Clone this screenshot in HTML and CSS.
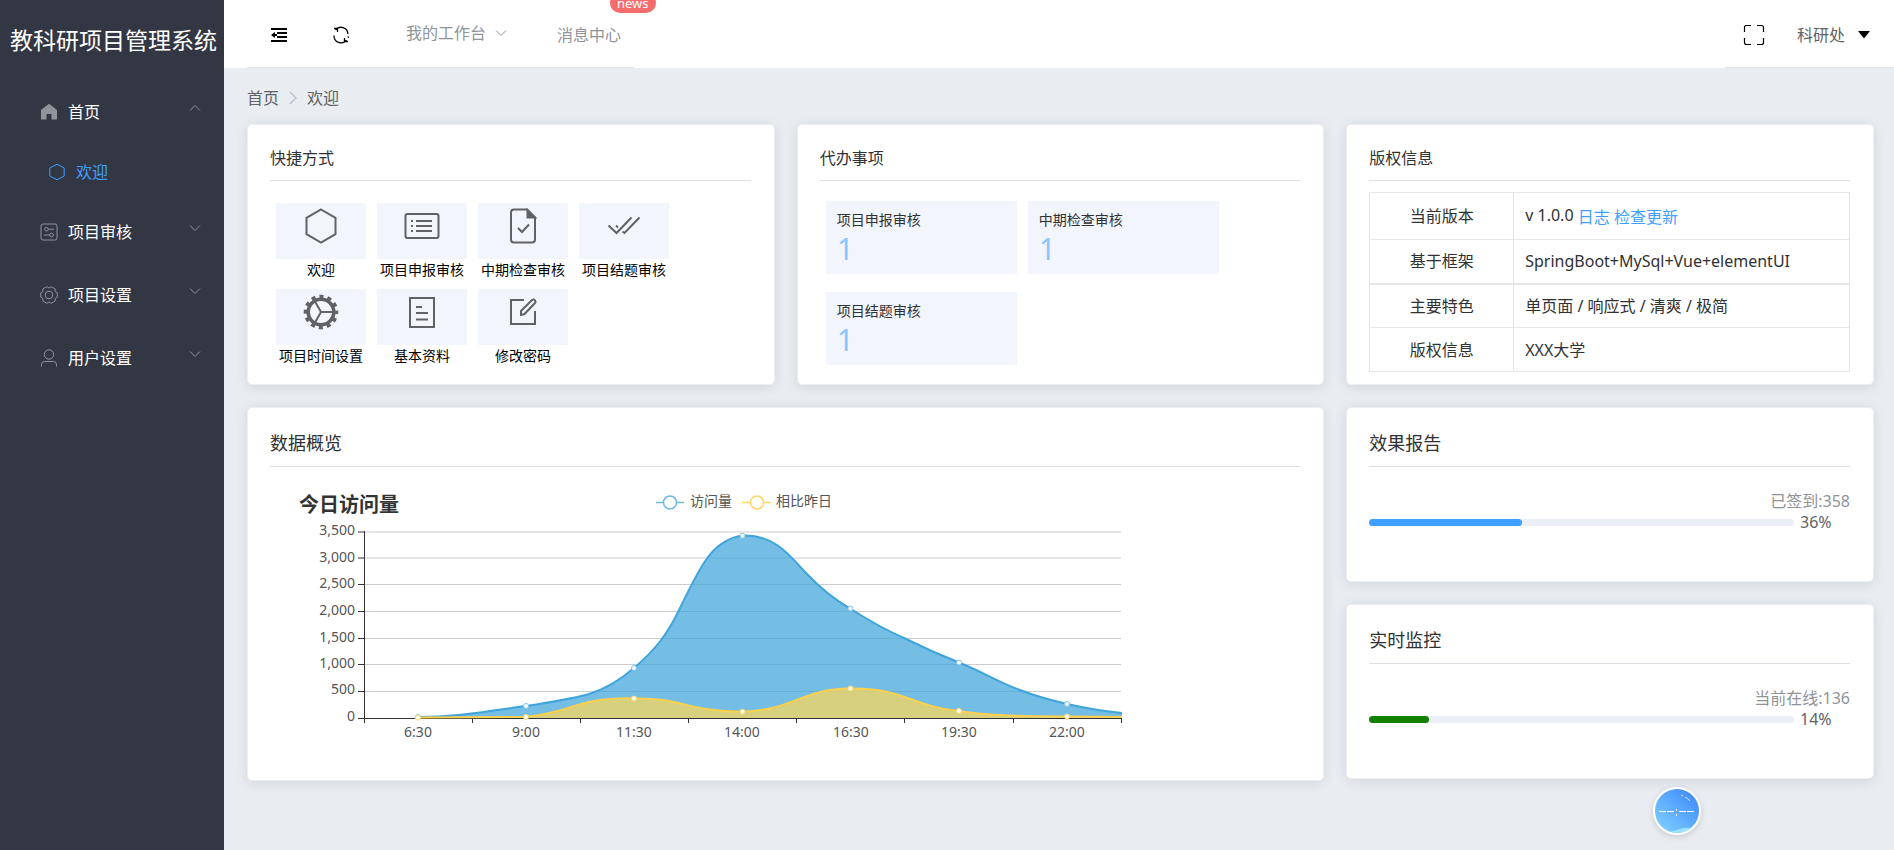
FILE: index.html
```html
<!DOCTYPE html>
<html lang="zh-CN">
<head>
<meta charset="utf-8">
<meta name="viewport" content="width=device-width, initial-scale=1">
<title>教科研项目管理系统</title>
<link rel="stylesheet" href="styles.css">
</head>
<body>
<div class="layout">
  <aside class="sidebar">
    <h1 class="brand">教科研项目管理系统</h1>
    <nav class="menu">
      <button class="menu-item" type="button" aria-expanded="true">
        <svg class="menu-icon" viewBox="0 0 18 18"><path fill="currentColor" stroke="none" d="M9 .8 1 7V16.500h5.500v-5.500h5v5.500H17V7z"/></svg>
        <span>首页</span>
        <svg class="arrow" viewBox="0 0 12 12"><path d="M1 8.500 6 3.500l5 5"/></svg>
      </button>
      <a class="menu-sub" href="#">
        <svg class="menu-icon" viewBox="0 0 18 18"><path d="M9 1.200 16.200 5v8L9 16.800 1.800 13V5z"/></svg>
        <span>欢迎</span>
      </a>
      <button class="menu-item" type="button" aria-expanded="false">
        <svg class="menu-icon" viewBox="0 0 18 18"><rect x="1" y="1" width="16" height="16" rx="2"/><circle cx="6.500" cy="6.200" r="1.800"/><circle cx="11.500" cy="12" r="1.800"/><path d="M8.300 6.200H14M4 12h5.700"/></svg>
        <span>项目审核</span>
        <svg class="arrow" viewBox="0 0 12 12"><path d="M1 3.500l5 5 5-5"/></svg>
      </button>
      <button class="menu-item" type="button" aria-expanded="false">
        <svg class="menu-icon" viewBox="0 0 18 18"><circle cx="9" cy="9" r="3.800"/><path stroke-linejoin="round" d="M17.300 6.800v4.400l-2.200 1.300v2.600l-3.900 2.200L9 16l-2.200 1.300-3.900-2.200v-2.600L.7 11.200V6.800l2.200-1.300V2.900L6.800.7 9 2l2.200-1.300 3.900 2.200v2.600z"/></svg>
        <span>项目设置</span>
        <svg class="arrow" viewBox="0 0 12 12"><path d="M1 3.500l5 5 5-5"/></svg>
      </button>
      <button class="menu-item" type="button" aria-expanded="false">
        <svg class="menu-icon" viewBox="0 0 18 18"><circle cx="9" cy="5.500" r="4.700"/><path d="M1.500 17.500v-2q0-3 3-3h9q3 0 3 3v2"/></svg>
        <span>用户设置</span>
        <svg class="arrow" viewBox="0 0 12 12"><path d="M1 3.500l5 5 5-5"/></svg>
      </button>
    </nav>
  </aside>

  <div class="page">
    <header class="topbar">
      <div class="topbar-left">
        <button class="icon-btn" type="button" aria-label="折叠菜单">
          <svg width="16" height="16" viewBox="0 0 16 16"><path fill="none" stroke="currentColor" stroke-width="2" d="M0 2h16M6 6h10M6 10h10M0 14h16"/><path fill="currentColor" d="M0 8l4-3v2h2v2H4v2z"/></svg>
        </button>
        <button class="icon-btn refresh" type="button" aria-label="刷新">
          <svg width="18" height="18" viewBox="0 0 18 18" fill="none" stroke="currentColor" stroke-width="1.300"><path d="M3.500 3.900A7 7 0 0 1 15.900 8M2 9.500a7 7 0 0 0 12.500 4.600M16.500 10.500a7 7 0 0 1-.4 1.300M2 2.500h3.500V6M16 15.500h-3.500V12"/></svg>
        </button>
        <a class="top-link workbench" href="#">我的工作台
          <svg class="arrow" viewBox="0 0 12 12"><path d="M1 3.500l5 5 5-5"/></svg>
        </a>
        <a class="top-link news" href="#">消息中心<span class="badge">news</span></a>
      </div>
      <div class="topbar-right">
        <button class="icon-btn" type="button" aria-label="全屏">
          <svg width="22" height="22" viewBox="0 0 22 22" fill="none" stroke="currentColor" stroke-width="1.200"><path d="M1.500 8V3.500q0-2 2-2H8M14 1.500h4.500q2 0 2 2V8M20.500 14v4.500q0 2-2 2H14M8 20.500H3.500q-2 0-2-2V14"/></svg>
        </button>
        <button class="user" type="button">科研处
          <svg width="12" height="8" viewBox="0 0 12 8"><path d="M0 0h12L6 7.500z"/></svg>
        </button>
      </div>
    </header>

    <main class="content">
      <nav class="crumbs" aria-label="面包屑">
        <a href="#">首页</a>
        <svg width="8" height="14" viewBox="0 0 8 14"><path d="M1 1l6 6-6 6"/></svg>
        <span>欢迎</span>
      </nav>

      <div class="grid">
        <section class="card">
          <h2 class="card-title">快捷方式</h2>
          <div class="shortcuts">
            <a class="shortcut" href="#"><span class="tile"><svg viewBox="0 0 36 36"><path d="M18 1.500 32.500 9.800v16.400L18 34.500 3.500 26.200V9.800z"/></svg></span>欢迎</a>
            <a class="shortcut" href="#"><span class="tile"><svg viewBox="0 0 36 36"><rect x="1.500" y="6" width="33" height="24" rx="2"/><path d="M12 13h16M12 18h16M12 23h16M7 13h2M7 18h2M7 23h2"/></svg></span>项目申报审核</a>
            <a class="shortcut" href="#"><span class="tile"><svg viewBox="0 0 36 36"><path d="M22 1.500H9q-3 0-3 3v27q0 3 3 3h18q3 0 3-3V9.500zM13 20l4 4 7-7.500"/><path class="solid" d="M22.500 2v7.500H30z"/></svg></span>中期检查审核</a>
            <a class="shortcut" href="#"><span class="tile"><svg viewBox="0 0 36 36"><path d="M2.500 17.500l8 7.500L25.500 9.500M10 17.500l2 2M16.500 23.500l2 1.500L33.500 9.500"/></svg></span>项目结题审核</a>
            <a class="shortcut" href="#"><span class="tile"><svg viewBox="0 0 36 36"><circle cx="18" cy="18" r="12.800" stroke-width="3.600"/><circle cx="18" cy="18" r="15.500" stroke-width="3.600" stroke-dasharray="4.100 4.015" stroke-dashoffset="2.050"/><path d="M18 18h12M18 18l-6-10.400M18 18l-6 10.400"/></svg></span>项目时间设置</a>
            <a class="shortcut" href="#"><span class="tile"><svg viewBox="0 0 36 36"><path d="M6 4h24v29H6zM12 13h6M12 19h12M12 25.500h12"/></svg></span>基本资料</a>
            <a class="shortcut" href="#"><span class="tile"><svg viewBox="0 0 36 36"><path d="M19 6H6v24h24V17M16 21v-4L27 6q1.500-1 2.800.2 1.200 1.500.2 2.800L19.500 20z"/></svg></span>修改密码</a>
          </div>
        </section>

        <section class="card">
          <h2 class="card-title">代办事项</h2>
          <div class="todos">
            <a class="todo" href="#">项目申报审核<strong>1</strong></a>
            <a class="todo" href="#">中期检查审核<strong>1</strong></a>
            <a class="todo" href="#">项目结题审核<strong>1</strong></a>
          </div>
        </section>

        <section class="card">
          <h2 class="card-title">版权信息</h2>
          <table class="info">
            <tr><th scope="row">当前版本</th><td>v 1.0.0 <a href="#">日志</a> <a href="#">检查更新</a></td></tr>
            <tr><th scope="row">基于框架</th><td>SpringBoot+MySql+Vue+elementUI</td></tr>
            <tr><th scope="row">主要特色</th><td>单页面 / 响应式 / 清爽 / 极简</td></tr>
            <tr><th scope="row">版权信息</th><td>XXX大学</td></tr>
          </table>
        </section>

        <section class="card overview">
          <h2 class="card-title large">数据概览</h2>
          <svg class="chart" viewBox="270 467 860 279" role="img" aria-label="今日访问量">
            <text class="chart-title" x="299" y="512">今日访问量</text>
            <g class="legend">
              <path class="blue" d="M656 502.500h28"/><circle class="blue" cx="670" cy="502.500" r="6.500"/>
              <text x="690" y="506">访问量</text>
              <path class="yellow" d="M742 502.500h29"/><circle class="yellow" cx="757" cy="502.500" r="6.500"/>
              <text x="776" y="506">相比昨日</text>
            </g>
            <path class="gridline" d="M364 532H1121M364 558H1121M364 584.500H1121M364 611.500H1121M364 638.500H1121M364 664.500H1121M364 691.500H1121"/>
            <path class="area-blue" d="M418 717C460 717 480 712 526 706C553 702 571 699 589 694C605 689 618 682 634 668C655 650 668 634 680 608C690 588 697 572 708 557C717 545 730 537 742 535.700C775 534 790 556 806 573C820 588 832 598 850 608.500C876 625 890 632 904 638C922 647 940 655 959 662.500C985 673 1000 683 1020 690C1035 696 1050 700 1067 704C1085 708 1100 711 1122 713V718H418z"/>
            <path class="line-blue" d="M418 717C460 717 480 712 526 706C553 702 571 699 589 694C605 689 618 682 634 668C655 650 668 634 680 608C690 588 697 572 708 557C717 545 730 537 742 535.700C775 534 790 556 806 573C820 588 832 598 850 608.500C876 625 890 632 904 638C922 647 940 655 959 662.500C985 673 1000 683 1020 690C1035 696 1050 700 1067 704C1085 708 1100 711 1122 713"/>
            <path class="area-yellow" d="M418 717.500L526 717C565 713 575 703 600 700C615 698 625 698 634 698.500C680 697 690 712 742 711.700C795 710 800 689 850 688.500C905 688 910 706 959 711C990 716 1020 716 1067 716.500L1122 717V718H418z"/>
            <path class="axis" d="M364.500 531V723M358 718.500H1122M358 532h6M358 558h6M358 584.500h6M358 611.500h6M358 638.500h6M358 664.500h6M358 691.500h6M472.500 718v5M580.500 718v5M688.500 718v5M796.500 718v5M904.500 718v5M1013.500 718v5M1121.500 718v5"/>
            <path class="line-yellow" d="M418 717.500L526 717C565 713 575 703 600 700C615 698 625 698 634 698.500C680 697 690 712 742 711.700C795 710 800 689 850 688.500C905 688 910 706 959 711C990 716 1020 716 1067 716.500L1122 717"/>
            <g class="dots-blue"><circle cx="418" cy="717" r="2.500"/><circle cx="526" cy="706" r="2.500"/><circle cx="634" cy="668" r="2.500"/><circle cx="742.500" cy="535.700" r="2.500"/><circle cx="850.500" cy="608.500" r="2.500"/><circle cx="959" cy="662.500" r="2.500"/><circle cx="1067" cy="704" r="2.500"/></g>
            <g class="dots-yellow"><circle cx="418" cy="717.600" r="2.500"/><circle cx="526" cy="717" r="2.500"/><circle cx="634" cy="698.500" r="2.500"/><circle cx="742.500" cy="711.700" r="2.500"/><circle cx="850.500" cy="688.500" r="2.500"/><circle cx="959" cy="711" r="2.500"/><circle cx="1067" cy="716.500" r="2.500"/></g>
            <g class="y-labels">
              <text x="355" y="535">3,500</text><text x="355" y="562">3,000</text><text x="355" y="588">2,500</text><text x="355" y="615">2,000</text><text x="355" y="642">1,500</text><text x="355" y="668">1,000</text><text x="355" y="694">500</text><text x="355" y="721">0</text>
            </g>
            <g class="x-labels">
              <text x="418" y="737">6:30</text><text x="526" y="737">9:00</text><text x="634" y="737">11:30</text><text x="742" y="737">14:00</text><text x="851" y="737">16:30</text><text x="959" y="737">19:30</text><text x="1067" y="737">22:00</text>
            </g>
          </svg>
        </section>

        <div class="side">
          <section class="card stat">
            <h2 class="card-title large">效果报告</h2>
            <p class="stat-note">已签到:358</p>
            <div class="progress"><div class="track"><div class="fill" style="width:36%"></div></div><span>36%</span></div>
          </section>
          <section class="card stat">
            <h2 class="card-title large">实时监控</h2>
            <p class="stat-note">当前在线:136</p>
            <div class="progress"><div class="track"><div class="fill green" style="width:14%"></div></div><span>14%</span></div>
          </section>
        </div>
      </div>
    </main>
  </div>
</div>

<button class="ball" type="button" aria-label="悬浮球">
  <svg viewBox="0 0 48 48">
    <defs>
      <linearGradient id="sky" x1="0.150" y1="0.900" x2="0.850" y2="0.150"><stop offset="0" stop-color="#7accfe"/><stop offset="1" stop-color="#458ffc"/></linearGradient>
      <clipPath id="disc"><circle cx="24" cy="24" r="22"/></clipPath>
    </defs>
    <circle cx="24" cy="24" r="24" fill="#fff"/>
    <circle cx="24" cy="24" r="22" fill="url(#sky)"/>
    <g clip-path="url(#disc)"><path fill="#9be4fe" d="M14 45q8-1 13-3t13-1v7H14z"/></g>
    <g fill="none" stroke="#fff"><path d="M6 24.500h7M14 24.500h7M26 24.500h7M34 24.500h7"/><path d="M23.500 22v2M23.500 27v2"/><path stroke-opacity=".7" d="M28 8l2 1M32 10q3 1 5 4"/></g>
  </svg>
</button>
</body>
</html>
```

FILE: styles.css
```css
* {
  box-sizing: border-box;
}

body {
  margin: 0;
  font: 16px/24px "Noto Sans", "Noto Sans CJK SC", sans-serif;
  color: #303133;
  background: #e9edf1;
}

a {
  color: inherit;
  text-decoration: none;
}

button {
  margin: 0;
  padding: 0;
  border: 0;
  background: none;
  font: inherit;
  color: inherit;
  cursor: pointer;
}

.layout {
  display: flex;
  min-height: 100vh;
}

/* Sidebar */
.sidebar {
  flex: 0 0 224px;
  background: #333744;
  color: #fff;
}

.brand {
  margin: 0;
  padding: 23px 0 23px 10px;
  font-size: 23px;
  line-height: 34px;
  font-weight: 400;
  white-space: nowrap;
}

.menu {
  display: flex;
  flex-direction: column;
}

.menu-item,
.menu-sub {
  display: flex;
  align-items: center;
  gap: 10px;
  height: 63px;
  padding: 0 23px 0 40px;
}

.menu-sub {
  height: 57px;
  padding-left: 48px;
  color: #409eff;
}

.menu-icon {
  width: 18px;
  height: 18px;
  color: #909399;
  fill: none;
  stroke: currentColor;
}

.menu-sub .menu-icon {
  color: #409eff;
}

.arrow {
  width: 12px;
  height: 12px;
  fill: none;
  stroke: #909399;
}

.menu-item .arrow {
  margin: 0 0 8px auto;
}

/* Top bar */
.page {
  flex: 1;
  min-width: 0;
}

.topbar {
  display: flex;
  justify-content: space-between;
  height: 68px;
  padding-left: 23px;
  background: #fff;
  color: #000;
}

.topbar-left,
.topbar-right {
  display: flex;
  align-items: center;
  padding-bottom: 10px;
  border-bottom: 1px solid #e6e6e6;
}

.topbar-left {
  padding-left: 24px;
  padding-right: 13px;
}

.topbar-right {
  gap: 32px;
  padding-left: 18px;
  padding-right: 24px;
}

.icon-btn {
  display: flex;
  margin-top: 12px;
}

.refresh {
  margin-left: 45px;
}

.top-link {
  position: relative;
  color: #909399;
}

.workbench {
  display: flex;
  align-items: center;
  gap: 9px;
  margin-left: 56px;
  margin-top: 9px;
}

.news {
  margin-left: 50px;
  margin-top: 12px;
}

.badge {
  position: absolute;
  left: 53px;
  top: -30px;
  padding: 0 7px;
  border-radius: 10px;
  background: #f56c6c;
  color: #fff;
  font-size: 13px;
  line-height: 20px;
}

.user {
  display: flex;
  align-items: center;
  gap: 13px;
  margin-top: 12px;
  color: #606266;
}

.user svg {
  fill: #000;
}

/* Content */
.content {
  padding: 18px 20px 22px 23px;
}

.crumbs {
  display: flex;
  align-items: center;
  gap: 10px;
  margin-bottom: 14px;
  color: #606266;
}

.crumbs svg {
  fill: none;
  stroke: #c0c4cc;
  stroke-width: 1.5;
}

.grid {
  display: grid;
  grid-template-columns: repeat(3, minmax(0, 1fr));
  gap: 22px;
}

.card {
  padding: 21px 23px 12px 22px;
  border: 1px solid #ebeef5;
  border-radius: 5px;
  background: #fff;
  box-shadow: 0 2px 13px rgba(0, 0, 0, 0.1);
}

.card-title {
  margin: 0;
  padding-bottom: 10px;
  border-bottom: 1px solid #dcdfe6;
  font-size: 16px;
  line-height: 24px;
  font-weight: 400;
}

.card-title.large {
  padding-bottom: 9px;
  font-size: 18px;
  line-height: 28px;
}

.shortcuts {
  display: flex;
  flex-wrap: wrap;
  gap: 8px 11px;
  padding: 22px 6px 0;
}

.shortcut {
  width: 90px;
  font-size: 14px;
  line-height: 22px;
  text-align: center;
  white-space: nowrap;
  color: #000;
}

.tile {
  display: flex;
  justify-content: center;
  height: 56px;
  padding-top: 5px;
  background: #f2f5fc;
}

.tile svg {
  width: 36px;
  height: 36px;
  fill: none;
  stroke: #606266;
  stroke-width: 2;
}

.tile .solid {
  fill: #606266;
}

.todos {
  display: flex;
  flex-wrap: wrap;
  gap: 18px 11px;
  padding: 20px 6px 0;
}

.todo {
  width: 191px;
  height: 73px;
  padding: 8px 11px;
  background: #f2f5fc;
  font-size: 14px;
  line-height: 22px;
}

.todo strong {
  display: block;
  color: #8cc5ff;
  font-size: 30px;
  line-height: 36px;
  font-weight: 400;
}

.info {
  width: 100%;
  margin-top: 11px;
  border-collapse: collapse;
}

.info th,
.info td {
  height: 44px;
  padding: 0 11px;
  border: 1px solid #e6e6e6;
  font-weight: 400;
  text-align: left;
}

.info th {
  width: 30%;
  text-align: center;
}

.info tr:first-child > * {
  height: 47px;
}

.info tr:nth-child(2) > * {
  border-bottom-width: 2px;
}

.info a {
  color: #409eff;
  vertical-align: -2px;
}

.overview {
  grid-column: span 2;
  padding-bottom: 34px;
}

.side {
  display: flex;
  flex-direction: column;
  gap: 22px;
}

.stat {
  padding-bottom: 50px;
}

.stat-note {
  margin: 22px 0 0;
  text-align: right;
  color: #909399;
}

.progress {
  display: flex;
  align-items: center;
  gap: 6px;
  line-height: 18px;
  color: #606266;
}

.progress span {
  width: 50px;
}

.track {
  flex: 1;
  height: 7px;
  border-radius: 4px;
  background: #ebeef5;
}

.fill {
  height: 100%;
  border-radius: 4px;
  background: #409eff;
}

.fill.green {
  background: #138000;
}

/* Chart */
.chart {
  display: block;
  width: 860px;
  max-width: 100%;
}

.chart text {
  font-size: 14px;
  fill: #555;
}

.chart .chart-title {
  font-size: 20px;
  font-weight: 700;
  fill: #333;
}

.y-labels {
  text-anchor: end;
}

.x-labels {
  text-anchor: middle;
}

.legend circle,
.legend path {
  fill: #fff;
  stroke-width: 1.5;
}

.blue {
  stroke: #6cb9e4;
}

.yellow {
  stroke: #fcd766;
}

.gridline {
  stroke: #ccc;
}

.axis {
  fill: none;
  stroke: #333;
}

.area-blue {
  fill: #45a8dc;
  fill-opacity: 0.75;
}

.area-yellow {
  fill: #f8d55c;
  fill-opacity: 0.75;
}

.line-blue,
.line-yellow {
  fill: none;
  stroke: #3fa4db;
  stroke-width: 2;
}

.line-yellow {
  stroke: #fcd04f;
}

.dots-blue,
.dots-yellow {
  fill: #fff;
  stroke: #7cc2e8;
}

.dots-yellow {
  stroke: #fcd766;
}

/* Floating ball */
.ball {
  position: fixed;
  right: 193px;
  bottom: 15px;
  width: 48px;
  height: 48px;
  border-radius: 50%;
  box-shadow: 0 2px 6px rgba(0, 0, 0, 0.15);
}

.ball svg {
  display: block;
}
```
